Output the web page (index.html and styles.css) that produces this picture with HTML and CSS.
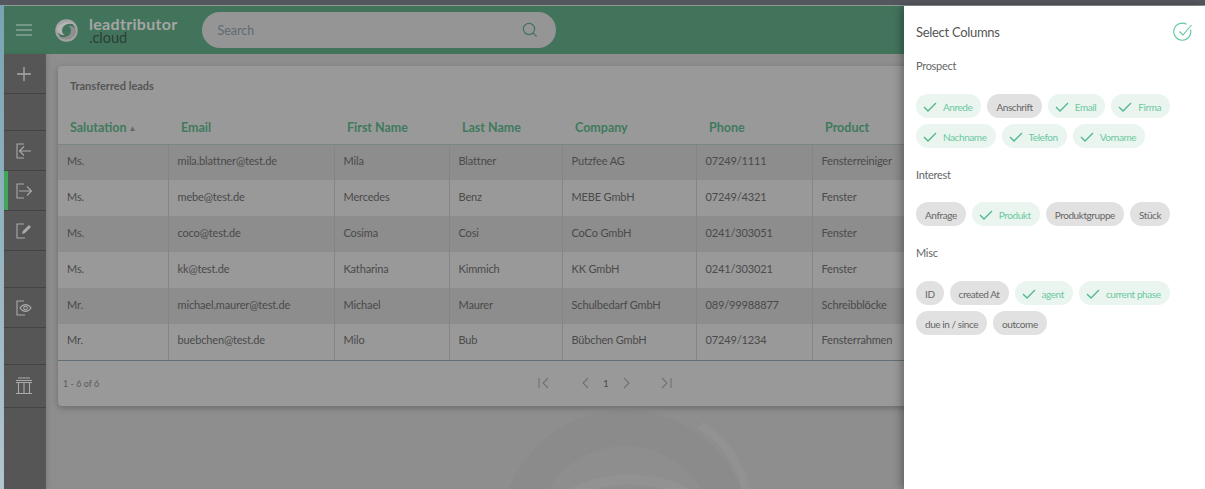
FILE: index.html
```html
<!DOCTYPE html>
<html lang="en">
<head>
<meta charset="utf-8">
<title>Transferred leads</title>
<link rel="stylesheet" href="styles.css">
</head>
<body>
<div class="topstrip"></div>
<div class="app">
  <header class="topbar">
    <button class="burger" aria-label="Menu"><svg width="16" height="12" viewBox="0 0 16 12"><path d="M0 1h16M0 6h16M0 11h16" stroke="#a9bdb2" stroke-width="1.2" fill="none"/></svg></button>
    <svg class="logo" width="23" height="23" viewBox="0 0 24 24" fill="none"><circle cx="12" cy="12" r="10.500" stroke="#a3a3a3" stroke-width="2.500"/><path d="M2 10C4 3 15 0 21 6C16 4 10 5 8 9C6.500 12 7.500 15 10 17C5 17 1.500 14 2 10Z" fill="#b3b3b3"/><path d="M22 14C20 21 9 24 3 18C8 20 14 19 16 15C17.500 12 16.500 9 14 7C19 7 22.500 10 22 14Z" fill="#8e8e8e"/></svg>
    <div class="brand"><span class="brand-top">leadtributor</span><span class="brand-sub">.cloud</span></div>
    <div class="search"><span>Search</span><svg width="16" height="16" viewBox="0 0 16 16" fill="none" stroke="#42745c" stroke-width="1.2"><circle cx="7" cy="7" r="5.6"/><path d="M11 11l3.6 3.6"/></svg></div>
  </header>
  <div class="body-row">
    <nav class="side">
      <div class="side-item h40"><svg width="16" height="16" viewBox="0 0 16 16"><path d="M8 1v14M1 8h14" stroke="#aaa" stroke-width="1.3"/></svg></div>
      <div class="side-item h37"></div>
      <div class="side-item h40"><svg width="16" height="16" viewBox="0 0 16 16" fill="none" stroke="#aaa" stroke-width="1.1"><path d="M8 1H1v14h7M15 8H4M8 3.500L3.500 8 8 12.500"/></svg></div>
      <div class="side-item h40 active"><svg width="16" height="16" viewBox="0 0 16 16" fill="none" stroke="#aaa" stroke-width="1.1"><path d="M8 1H1v14h7M3 8h12M11 3.500L15.500 8 11 12.500"/></svg></div>
      <div class="side-item h40"><svg width="16" height="16" viewBox="0 0 16 16" fill="none" stroke="#aaa" stroke-width="1.1"><path d="M8 1H1v14h8"/><path d="M6 11l.8-3L13 2l2 2-6 6z" fill="#aaa" stroke="none"/></svg></div>
      <div class="side-item h37"></div>
      <div class="side-item h40"><svg width="16" height="16" viewBox="0 0 16 16" fill="none" stroke="#aaa" stroke-width="1.100"><path d="M8 1H1v14h8"/><path d="M4 8c3-4.500 8-4.500 11 0-3 4.500-8 4.500-11 0z"/><circle cx="9.500" cy="8" r="1.800"/></svg></div>
      <div class="side-item h37"></div>
      <div class="side-item h43"><svg width="18" height="18" viewBox="0 0 18 18" fill="none" stroke="#aaa" stroke-width="1.100"><path d="M3 1h12M1 3.500h16M1 5.500h16M1 16.500h16M3.500 6v10M9 6v10M14.500 6v10"/></svg></div>
      <div class="side-item rest"></div>
    </nav>
    <main class="content">
      <svg class="watermark" width="320" height="320" viewBox="0 0 320 320" fill="none" aria-hidden="true"><circle cx="160" cy="160" r="107" stroke="#8b8b8b" stroke-width="36"/><path d="M65 170C85 105 170 85 235 125" stroke="#929292" stroke-width="10"/><path d="M235 50C275 75 290 115 280 175" stroke="#929292" stroke-width="8"/></svg>
      <section class="card">
        <h2 class="card-title">Transferred leads</h2>
        <table class="grid">
          <colgroup><col class="c1"><col class="c2"><col class="c3"><col class="c4"><col class="c5"><col class="c6"><col class="c7"></colgroup>
          <thead>
            <tr><th class="first">Salutation <i class="sort">▲</i></th><th>Email</th><th>First Name</th><th>Last Name</th><th>Company</th><th>Phone</th><th>Product</th></tr>
          </thead>
          <tbody>
            <tr><td>Ms.</td><td>mila.blattner@test.de</td><td>Mila</td><td>Blattner</td><td>Putzfee AG</td><td>07249/1111</td><td>Fensterreiniger</td></tr>
            <tr><td>Ms.</td><td>mebe@test.de</td><td>Mercedes</td><td>Benz</td><td>MEBE GmbH</td><td>07249/4321</td><td>Fenster</td></tr>
            <tr><td>Ms.</td><td>coco@test.de</td><td>Cosima</td><td>Cosi</td><td>CoCo GmbH</td><td>0241/303051</td><td>Fenster</td></tr>
            <tr><td>Ms.</td><td>kk@test.de</td><td>Katharina</td><td>Kimmich</td><td>KK GmbH</td><td>0241/303021</td><td>Fenster</td></tr>
            <tr><td>Mr.</td><td>michael.maurer@test.de</td><td>Michael</td><td>Maurer</td><td>Schulbedarf GmbH</td><td>089/99988877</td><td>Schreibblöcke</td></tr>
            <tr><td>Mr.</td><td>buebchen@test.de</td><td>Milo</td><td>Bub</td><td>Bübchen GmbH</td><td>07249/1234</td><td>Fensterrahmen</td></tr>
          </tbody>
        </table>
        <footer class="pager">
          <span class="count">1 - 6 of 6</span>
          <div class="pager-nav">
            <svg width="12" height="12" viewBox="0 0 12 12" fill="none" stroke="#717171" stroke-width="1.100"><path d="M1 1v10M10 1L5 6l5 5"/></svg>
            <svg class="prev" width="8" height="12" viewBox="0 0 8 12" fill="none" stroke="#717171" stroke-width="1.100"><path d="M7 1L2 6l5 5"/></svg>
            <span class="page">1</span>
            <svg class="next" width="8" height="12" viewBox="0 0 8 12" fill="none" stroke="#717171" stroke-width="1.100"><path d="M1 1l5 5-5 5"/></svg>
            <svg class="last" width="12" height="12" viewBox="0 0 12 12" fill="none" stroke="#717171" stroke-width="1.100"><path d="M2 1l5 5-5 5M11 1v10"/></svg>
          </div>
        </footer>
      </section>
    </main>
  </div>
</div>
<aside class="panel">
  <div class="panel-head"><span>Select Columns</span><svg width="20" height="20" viewBox="0 0 20 20" fill="none" stroke="#5fc79b" stroke-width="1.100"><path d="M17.500 7.500A8.500 8.500 0 1 1 13.500 2.300"/><path d="M6.500 9.500L10 13l8.500-10"/></svg></div>
  <h3 class="group g1">Prospect</h3>
  <div class="chips">
    <span class="chip on"><svg viewBox="0 0 14 10"><path d="M1 5l4 4 8-8"/></svg>Anrede</span>
    <span class="chip">Anschrift</span>
    <span class="chip on"><svg viewBox="0 0 14 10"><path d="M1 5l4 4 8-8"/></svg>Email</span>
    <span class="chip on"><svg viewBox="0 0 14 10"><path d="M1 5l4 4 8-8"/></svg>Firma</span>
    <span class="chip on"><svg viewBox="0 0 14 10"><path d="M1 5l4 4 8-8"/></svg>Nachname</span>
    <span class="chip on"><svg viewBox="0 0 14 10"><path d="M1 5l4 4 8-8"/></svg>Telefon</span>
    <span class="chip on"><svg viewBox="0 0 14 10"><path d="M1 5l4 4 8-8"/></svg>Vorname</span>
  </div>
  <h3 class="group g2">Interest</h3>
  <div class="chips">
    <span class="chip">Anfrage</span>
    <span class="chip on"><svg viewBox="0 0 14 10"><path d="M1 5l4 4 8-8"/></svg>Produkt</span>
    <span class="chip">Produktgruppe</span>
    <span class="chip">Stück</span>
  </div>
  <h3 class="group g3">Misc</h3>
  <div class="chips">
    <span class="chip">ID</span>
    <span class="chip">created At</span>
    <span class="chip on"><svg viewBox="0 0 14 10"><path d="M1 5l4 4 8-8"/></svg>agent</span>
    <span class="chip on"><svg viewBox="0 0 14 10"><path d="M1 5l4 4 8-8"/></svg>current phase</span>
    <span class="chip">due in / since</span>
    <span class="chip">outcome</span>
  </div>
</aside>
</body>
</html>
```
FILE: styles.css
```css
* { box-sizing: border-box; }
html, body { height: 100%; }
body {
  margin: 0;
  overflow: hidden;
  font-family: "Lato", "Noto Sans", sans-serif;
  color: #4a4a4a;
  background: linear-gradient(#78a3b3, #b4c6d0);
  display: flex;
  flex-direction: column;
}
.topstrip { height: 5px; flex: none; background: #55575e; }
.app {
  flex: 1;
  min-height: 0;
  margin-left: 4px;
  display: flex;
  flex-direction: column;
  border-top: 1px solid #8d9a94;
}
.topbar {
  height: 48px;
  flex: none;
  background: #42745c;
  display: flex;
  align-items: center;
}
.burger {
  width: 42px;
  padding: 0 3px 0 0;
  border: 0;
  background: none;
  display: flex;
  justify-content: center;
}
.logo { margin-left: 9px; }
.brand { margin-left: 11px; display: flex; flex-direction: column; }
.brand-top { font-size: 16px; line-height: 15px; font-weight: 700; color: #a5a5a5; letter-spacing: .3px; }
.brand-sub { font-size: 14.500px; line-height: 14px; color: #2c3d35; }
.search {
  margin-left: 25px;
  width: 354px;
  height: 36px;
  border-radius: 18px;
  background: #959595;
  display: flex;
  align-items: center;
  justify-content: space-between;
  padding: 0 18px 0 15px;
  font-size: 12.500px;
  color: #5f6a72;
}
.body-row { flex: 1; min-height: 0; display: flex; }
.side { width: 42px; flex: none; background: #565656; display: flex; flex-direction: column; box-shadow: 2px 0 4px rgba(0,0,0,.1); z-index: 1; }
.side-item { display: flex; align-items: center; justify-content: center; border-bottom: 1px solid #444; flex: none; padding-right: 3px; }
.side-item.rest { flex: 1; border: 0; }
.h37 { height: 37px; }
.h40 { height: 40px; }
.h43 { height: 43px; }
.active { box-shadow: inset 4px 0 0 #3fa65c; }
.content {
  flex: 1;
  min-width: 0;
  background: #8e8e8e;
  padding: 12px 0 0 12px;
  position: relative;
  overflow: hidden;
}
.watermark { position: absolute; left: 419px; top: 321px; }
.card {
  position: relative;
  height: 340px;
  background: #999;
  border-radius: 4px 0 0 4px;
  box-shadow: 0 2px 6px rgba(0,0,0,.25);
}
.card-title { margin: 0; padding: 13px 12px 0; height: 44px; font-size: 11px; line-height: 14px; font-weight: 700; color: #555; }
.grid { border-collapse: collapse; table-layout: fixed; width: 846px; }
.c1 { width: 110px; } .c2 { width: 166px; } .c3 { width: 115px; } .c4 { width: 113px; } .c5 { width: 134px; } .c6 { width: 116px; } .c7 { width: 92px; }
.grid th {
  height: 34px;
  padding: 1px 0 0 13px;
  text-align: left;
  font-size: 12.500px;
  font-weight: 700;
  color: #3f7a5d;
  border-bottom: 1px solid #7b8581;
  white-space: nowrap;
}
.grid th.first { padding-left: 12px; }
.sort { font-style: normal; font-size: 8px; color: #5f6d66; vertical-align: 1px; margin-left: -1px; }
.grid td {
  height: 36px;
  padding: 0 0 4px 9px;
  font-size: 11px;
  letter-spacing: -.15px;
  color: #4a4a4a;
  white-space: nowrap;
  overflow: hidden;
  border-left: 1px solid #858585;
}
.grid td:first-child { border-left: 0; }
.grid tbody tr:nth-child(odd) { background: #8d8d8d; }
.grid tbody tr:last-child td { border-bottom: 1px solid #5f7078; }
.pager { position: relative; height: 45px; display: flex; align-items: center; padding-left: 5px; }
.count { font-size: 9px; color: #5c5c5c; }
.pager-nav { position: absolute; left: 480px; top: 16px; display: flex; align-items: center; }
.prev { margin-left: 31px; }
.page { margin-left: 14px; width: 6px; font-size: 10px; color: #4d4d4d; }
.next { margin-left: 14px; }
.last { margin-left: 29px; }
.panel {
  position: absolute;
  left: 904px;
  top: 6px;
  right: 0;
  bottom: 0;
  background: #fff;
  padding: 0 12px;
  box-shadow: -3px 0 8px rgba(0,0,0,.3);
}
.panel-head { height: 52px; display: flex; align-items: center; justify-content: space-between; font-size: 13px; letter-spacing: -.3px; color: #555; }
.group { margin: 0; font-size: 11px; letter-spacing: -.3px; font-weight: 400; color: #666; line-height: 16px; }
.g1 { margin-bottom: 20px; }
.g2 { margin-top: 19px; margin-bottom: 19px; }
.g3 { margin-top: 19px; margin-bottom: 20px; }
.chips { display: flex; flex-wrap: wrap; gap: 6px; width: 270px; }
.chip {
  height: 24px;
  padding: 1px 9px 0;
  border-radius: 12px;
  background: #e1e1e1;
  font-size: 10px;
  letter-spacing: -.42px;
  color: #666;
  display: inline-flex;
  align-items: center;
  white-space: nowrap;
}
.chip svg { width: 14px; height: 10px; margin-right: 6px; margin-left: -2px; fill: none; stroke: #4fb78a; stroke-width: 1.300; }
.chip.on { background: #eaf5f0; color: #6cc8a0; }
```
